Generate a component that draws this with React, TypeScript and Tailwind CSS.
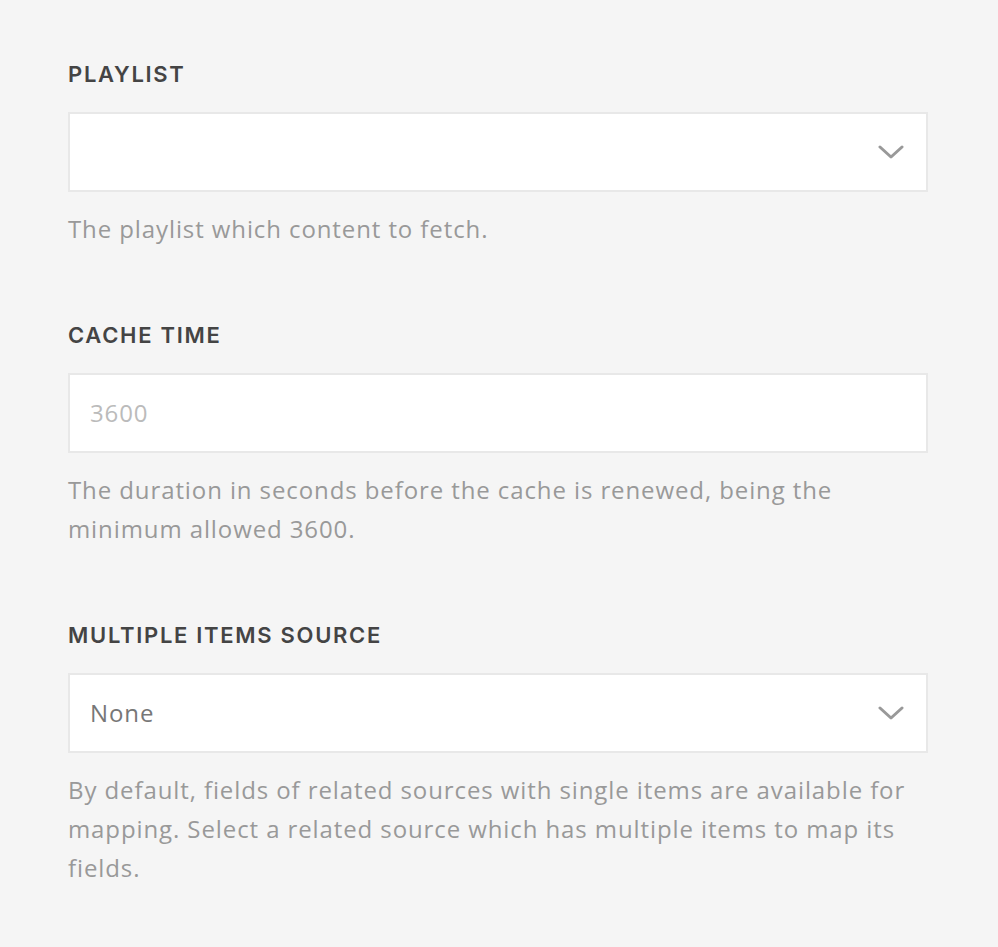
import React from "react";

const Chevron = () => (
  <svg width="26" height="16" viewBox="0 0 26 16" fill="none" className="shrink-0">
    <path d="M2 3l11 10L24 3" stroke="#999999" strokeWidth="3" strokeLinecap="round" strokeLinejoin="round" />
  </svg>
);

interface FieldProps {
  label: string;
  help: string;
  children: React.ReactNode;
}

const Field: React.FC<FieldProps> = ({ label, help, children }) => {
  return (
    <div className="flex flex-col">
      <label className="text-[22px] leading-[30px] font-semibold text-[#444444] tracking-[1.7px] font-['Inter',sans-serif]">
        {label}
      </label>
      <div className="mt-[23px] h-[80px] bg-white border-2 border-[#e8e8e8] flex items-center pl-[20px] pr-[22px]">
        {children}
      </div>
      <p className="mt-[17px] text-[24px] leading-[39px] tracking-[0.9px] text-[#999999]">{help}</p>
    </div>
  );
};

export default function App() {
  return (
    <div className="min-h-screen bg-[#f5f5f5] font-['Open_Sans',sans-serif]">
      <div className="w-[860px] ml-[68px] pt-[59px] pb-[60px] flex flex-col gap-[72px]">
        {/* Playlist select */}
        <Field label="PLAYLIST" help="The playlist which content to fetch.">
          <span className="flex-1" />
          <Chevron />
        </Field>

        {/* Cache time input */}
        <Field
          label="CACHE TIME"
          help="The duration in seconds before the cache is renewed, being the minimum allowed 3600."
        >
          <span className="flex-1 text-[24px] tracking-[0.9px] text-[#bbbbbb]">3600</span>
        </Field>

        {/* Multiple items source select */}
        <Field
          label="MULTIPLE ITEMS SOURCE"
          help="By default, fields of related sources with single items are available for mapping. Select a related source which has multiple items to map its fields."
        >
          <span className="flex-1 text-[24px] tracking-[0.9px] text-[#777777]">None</span>
          <Chevron />
        </Field>
      </div>
    </div>
  );
}
